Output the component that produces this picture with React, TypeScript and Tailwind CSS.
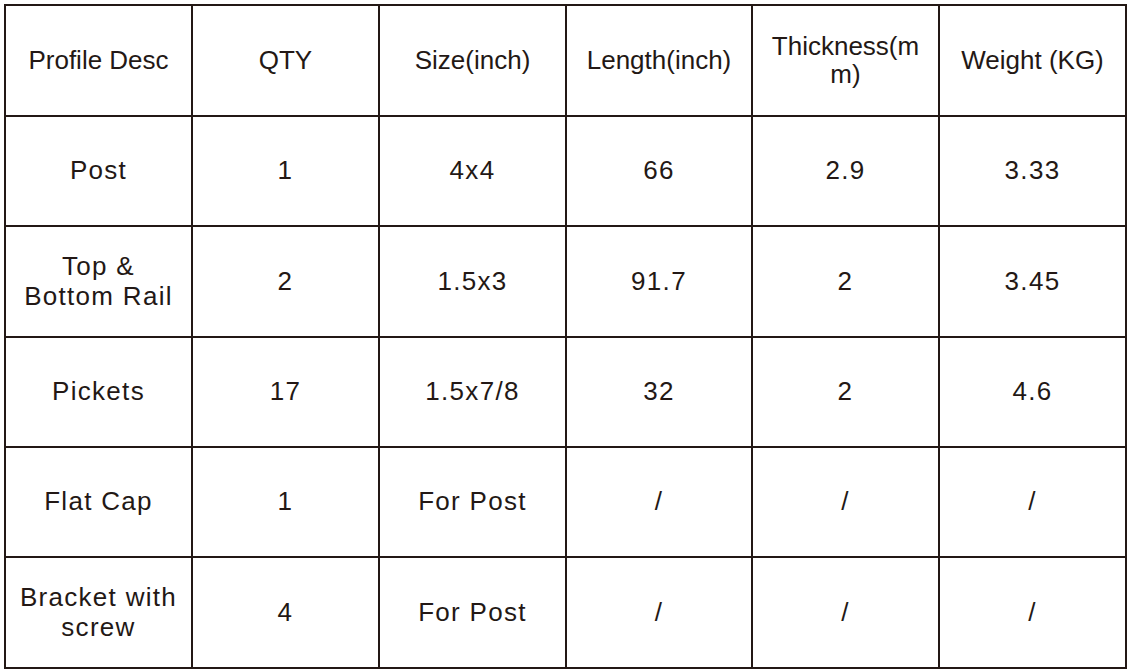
import React from "react";

const header: React.ReactNode[] = [
  "Profile Desc",
  "QTY",
  "Size(inch)",
  "Length(inch)",
  <>Thickness(m<br />m)</>,
  "Weight (KG)",
];

const rows: React.ReactNode[][] = [
  ["Post", "1", "4x4", "66", "2.9", "3.33"],
  [<>Top &amp;<br />Bottom Rail</>, "2", "1.5x3", "91.7", "2", "3.45"],
  ["Pickets", "17", "1.5x7/8", "32", "2", "4.6"],
  ["Flat Cap", "1", "For Post", "/", "/", "/"],
  [<>Bracket with<br />screw</>, "4", "For Post", "/", "/", "/"],
];

export default function App() {
  return (
    <div className="w-[1130px] h-[672px] bg-white pt-[4px] pl-[4px]" style={{ fontFamily: '"Liberation Sans", Arial, sans-serif' }}>
      <div className="inline-grid grid-cols-[185px_185px_185px_184px_185px_185px] grid-rows-[109px_108px_109px_108px_108px_109px] gap-[2px] p-[2px] bg-[#231815]">
        {header.map((h, i) => (
          <div key={"h" + i} className="bg-white flex items-center justify-center text-center text-[26px] leading-[28px] pb-[2px] text-[#231815]">
            <span>{h}</span>
          </div>
        ))}
        {rows.map((r, ri) =>
          r.map((c, ci) => (
            <div key={ri + "-" + ci} className="bg-white flex items-center justify-center text-center text-[26px] leading-[30px] pb-[2px] tracking-[1.3px] text-[#231815]">
              <span>{c}</span>
            </div>
          ))
        )}
      </div>
    </div>
  );
}
